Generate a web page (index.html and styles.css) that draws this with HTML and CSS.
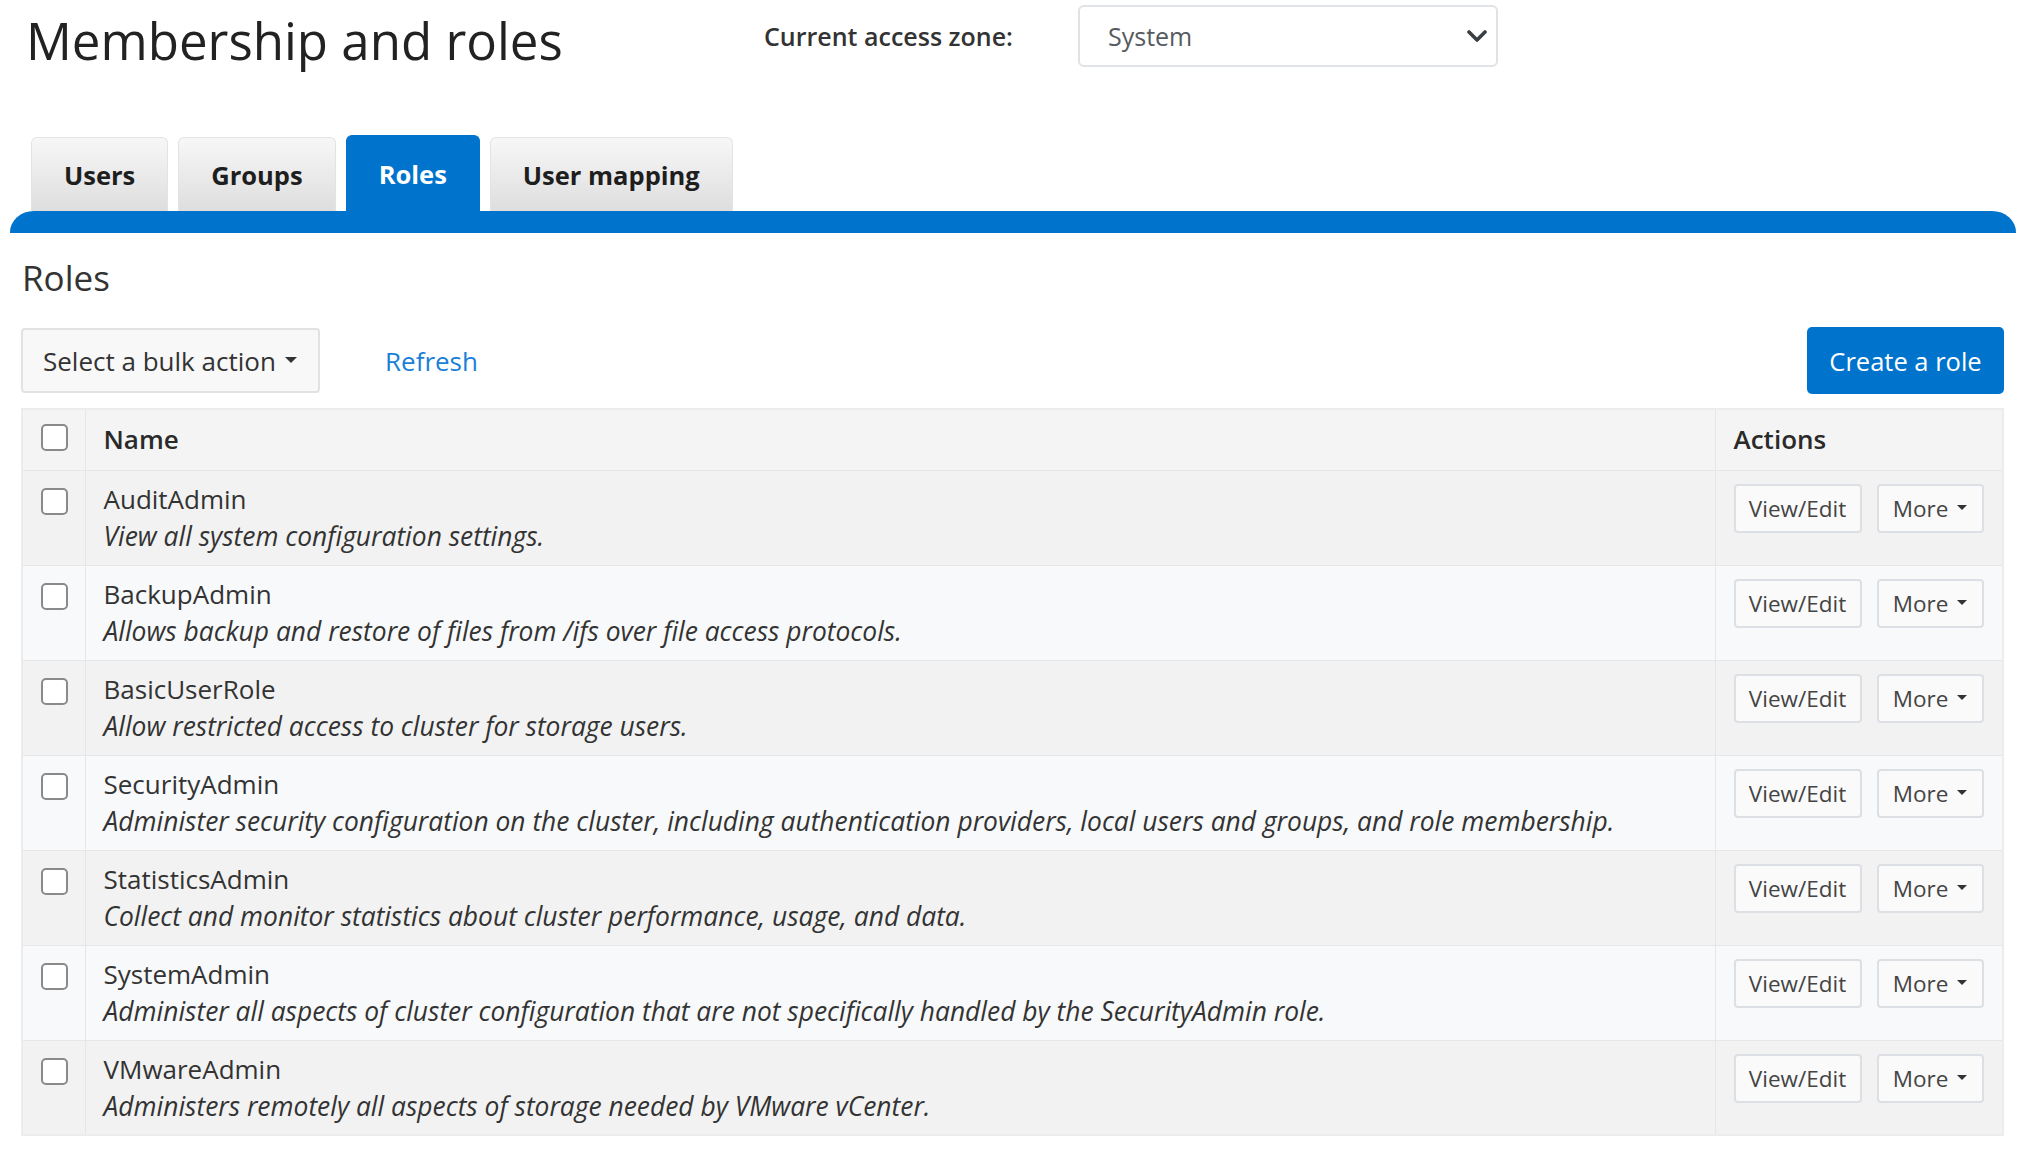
FILE: index.html
```html
<!DOCTYPE html>
<html lang="en">
<head>
<meta charset="utf-8">
<title>Membership and roles</title>
<link rel="stylesheet" href="styles.css">
</head>
<body>
<header class="page-header">
  <h1 class="page-title">Membership and roles</h1>
  <div class="zone">
    <span class="zone-label">Current access zone:</span>
    <div class="zone-select">
      <span class="zone-value">System</span>
      <svg class="chevron" viewBox="0 0 20 12" width="20" height="12" aria-hidden="true"><path d="M2 2 L10 10 L18 2" fill="none" stroke="#3a3f44" stroke-width="3.6" stroke-linecap="round" stroke-linejoin="round"/></svg>
    </div>
  </div>
</header>

<nav class="tabs">
  <div class="tab-list">
    <a class="tab">Users</a>
    <a class="tab">Groups</a>
    <a class="tab tab-active">Roles</a>
    <a class="tab">User mapping</a>
  </div>
  <div class="tab-bar"></div>
</nav>

<main class="content">
  <h2 class="section-title">Roles</h2>
  <div class="toolbar">
    <button class="btn-bulk">Select a bulk action<span class="caret"></span></button>
    <a class="refresh">Refresh</a>
    <button class="btn-primary">Create a role</button>
  </div>

  <table class="roles-table">
    <thead>
      <tr>
        <th class="col-check"><span class="checkbox"></span></th>
        <th class="col-name">Name</th>
        <th class="col-actions">Actions</th>
      </tr>
    </thead>
    <tbody>
      <tr>
        <td class="col-check"><span class="checkbox"></span></td>
        <td class="col-name"><div class="role-name">AuditAdmin</div><div class="role-desc">View all system configuration settings.</div></td>
        <td class="col-actions"><div class="actions"><button class="btn-sm">View/Edit</button><button class="btn-sm">More<span class="caret caret-sm"></span></button></div></td>
      </tr>
      <tr>
        <td class="col-check"><span class="checkbox"></span></td>
        <td class="col-name"><div class="role-name">BackupAdmin</div><div class="role-desc">Allows backup and restore of files from /ifs over file access protocols.</div></td>
        <td class="col-actions"><div class="actions"><button class="btn-sm">View/Edit</button><button class="btn-sm">More<span class="caret caret-sm"></span></button></div></td>
      </tr>
      <tr>
        <td class="col-check"><span class="checkbox"></span></td>
        <td class="col-name"><div class="role-name">BasicUserRole</div><div class="role-desc">Allow restricted access to cluster for storage users.</div></td>
        <td class="col-actions"><div class="actions"><button class="btn-sm">View/Edit</button><button class="btn-sm">More<span class="caret caret-sm"></span></button></div></td>
      </tr>
      <tr>
        <td class="col-check"><span class="checkbox"></span></td>
        <td class="col-name"><div class="role-name">SecurityAdmin</div><div class="role-desc">Administer security configuration on the cluster, including authentication providers, local users and groups, and role membership.</div></td>
        <td class="col-actions"><div class="actions"><button class="btn-sm">View/Edit</button><button class="btn-sm">More<span class="caret caret-sm"></span></button></div></td>
      </tr>
      <tr>
        <td class="col-check"><span class="checkbox"></span></td>
        <td class="col-name"><div class="role-name">StatisticsAdmin</div><div class="role-desc">Collect and monitor statistics about cluster performance, usage, and data.</div></td>
        <td class="col-actions"><div class="actions"><button class="btn-sm">View/Edit</button><button class="btn-sm">More<span class="caret caret-sm"></span></button></div></td>
      </tr>
      <tr>
        <td class="col-check"><span class="checkbox"></span></td>
        <td class="col-name"><div class="role-name">SystemAdmin</div><div class="role-desc">Administer all aspects of cluster configuration that are not specifically handled by the SecurityAdmin role.</div></td>
        <td class="col-actions"><div class="actions"><button class="btn-sm">View/Edit</button><button class="btn-sm">More<span class="caret caret-sm"></span></button></div></td>
      </tr>
      <tr>
        <td class="col-check"><span class="checkbox"></span></td>
        <td class="col-name"><div class="role-name">VMwareAdmin</div><div class="role-desc">Administers remotely all aspects of storage needed by VMware vCenter.</div></td>
        <td class="col-actions"><div class="actions"><button class="btn-sm">View/Edit</button><button class="btn-sm">More<span class="caret caret-sm"></span></button></div></td>
      </tr>
    </tbody>
  </table>
</main>
</body>
</html>
```

FILE: styles.css
```css
* { box-sizing: border-box; }

html, body {
  margin: 0;
  padding: 0;
  background: #ffffff;
}

body {
  font-family: "Open Sans", "Noto Sans", "Liberation Sans", sans-serif;
  color: #333333;
  font-size: 26px;
  width: 2031px;
}

/* ---------- header ---------- */
.page-header {
  display: flex;
  align-items: flex-start;
  padding: 5px 0 0 26px;
  height: 136px;
}

.page-title {
  margin: 4px 0 0 0;
  font-size: 51px;
  font-weight: 400;
  color: #222222;
  line-height: 62px;
  width: 738px;
  white-space: nowrap;
}

.zone {
  display: flex;
  align-items: center;
  height: 62px;
}

.zone-label {
  font-size: 25px;
  font-weight: 600;
  color: #333333;
  width: 314px;
  white-space: nowrap;
}

.zone-select {
  width: 420px;
  height: 62px;
  border: 2px solid #dfe2e6;
  border-radius: 6px;
  display: flex;
  align-items: center;
  justify-content: space-between;
  padding: 0 9px 0 28px;
  background: #ffffff;
}

.zone-value {
  font-size: 25px;
  color: #555a60;
}

.chevron { display: block; }

/* ---------- tabs ---------- */
.tabs {
  padding: 0 15px 0 10px;
}

.tab-list {
  display: flex;
  gap: 10px;
  padding-left: 21px;
  height: 75px;
  align-items: flex-end;
}

.tab {
  display: flex;
  align-items: center;
  justify-content: center;
  height: 74px;
  padding: 0 32px;
  font-size: 25.5px;
  font-weight: 700;
  color: #1e1e1e;
  background: linear-gradient(#f7f7f7, #dedede);
  border: 1px solid #e3e3e3;
  border-bottom: none;
  border-radius: 6px 6px 0 0;
}

.tab-active {
  background: #0073cc;
  border-color: #0073cc;
  color: #ffffff;
  height: 76px;
}

.tab-bar {
  height: 22px;
  background: #0073cc;
  border-radius: 24px 24px 0 0 / 21px 21px 0 0;
}

/* ---------- content ---------- */
.content {
  padding: 0 27px 0 21px;
}

.section-title {
  margin: 0;
  font-size: 35px;
  font-weight: 400;
  color: #333333;
  line-height: 48px;
  padding: 21px 0 0 1px;
  height: 95px;
}

.toolbar {
  display: flex;
  align-items: center;
  height: 65px;
}

.btn-bulk {
  font-family: inherit;
  font-size: 26px;
  color: #333333;
  height: 65px;
  padding: 0 16px 0 20px;
  width: 299px;
  text-align: left;
  background: #f8f8f8;
  border: 2px solid #e2e2e2;
  border-radius: 4px;
  display: flex;
  align-items: center;
  white-space: nowrap;
}

.caret {
  display: inline-block;
  width: 0;
  height: 0;
  margin-left: 9px;
  border-left: 6px solid transparent;
  border-right: 6px solid transparent;
  border-top: 6px solid #333333;
  position: relative;
  top: -1px;
}

.refresh {
  margin-left: 65px;
  font-size: 26px;
  color: #1a7fd6;
}

.btn-primary {
  margin-left: auto;
  font-family: inherit;
  font-size: 25.5px;
  color: #ffffff;
  background: #0073cc;
  border: none;
  border-radius: 5px;
  height: 67px;
  width: 197px;
  white-space: nowrap;
}

/* ---------- table ---------- */
.roles-table {
  margin-top: 15px;
  width: 1983px;
  border-collapse: collapse;
  border: 2px solid #ececec;
}

.roles-table th,
.roles-table td {
  vertical-align: top;
  border: 1px solid #e6e6e6;
  text-align: left;
}

.roles-table thead th {
  background: #f4f4f4;
  font-weight: 600;
  color: #2a2a2a;
  height: 61px;
  padding: 11px 18px 0 18px;
  line-height: 37px;
}

.roles-table tbody tr:nth-child(odd) td { background: #f2f2f2; }
.roles-table tbody tr:nth-child(even) td { background: #f8f9fa; }

.roles-table tbody td {
  height: 95px;
  padding: 10px 18px 0 18px;
  line-height: 37px;
}

.col-check {
  width: 63px;
}

.roles-table th.col-check,
.roles-table td.col-check {
  padding: 14px 0 0 18px;
}

.roles-table td.col-check { padding-top: 17px; }

.col-actions {
  width: 288px;
}

.checkbox {
  display: block;
  width: 27px;
  height: 27px;
  background: #ffffff;
  border: 2px solid #8a8a8a;
  border-radius: 5px;
}

.role-name {
  color: #333333;
  font-size: 26px;
}

.role-desc {
  font-style: italic;
  color: #333333;
  font-size: 26.4px;
  white-space: nowrap;
}

.roles-table td.col-actions {
  padding: 13px 0 0 18px;
}

.actions {
  display: flex;
  gap: 15px;
}

.btn-sm {
  font-family: inherit;
  font-size: 22.5px;
  color: #444444;
  background: #fafafa;
  border: 2px solid #dcdfe3;
  border-radius: 4px;
  height: 49px;
  padding: 0 10px;
  display: flex;
  align-items: center;
  justify-content: center;
  white-space: nowrap;
}

.btn-sm:first-child { width: 128px; }
.btn-sm:last-child { width: 107px; }

.caret-sm {
  margin-left: 9px;
  border-left-width: 5px;
  border-right-width: 5px;
  border-top-width: 5px;
  top: -1px;
}
```
